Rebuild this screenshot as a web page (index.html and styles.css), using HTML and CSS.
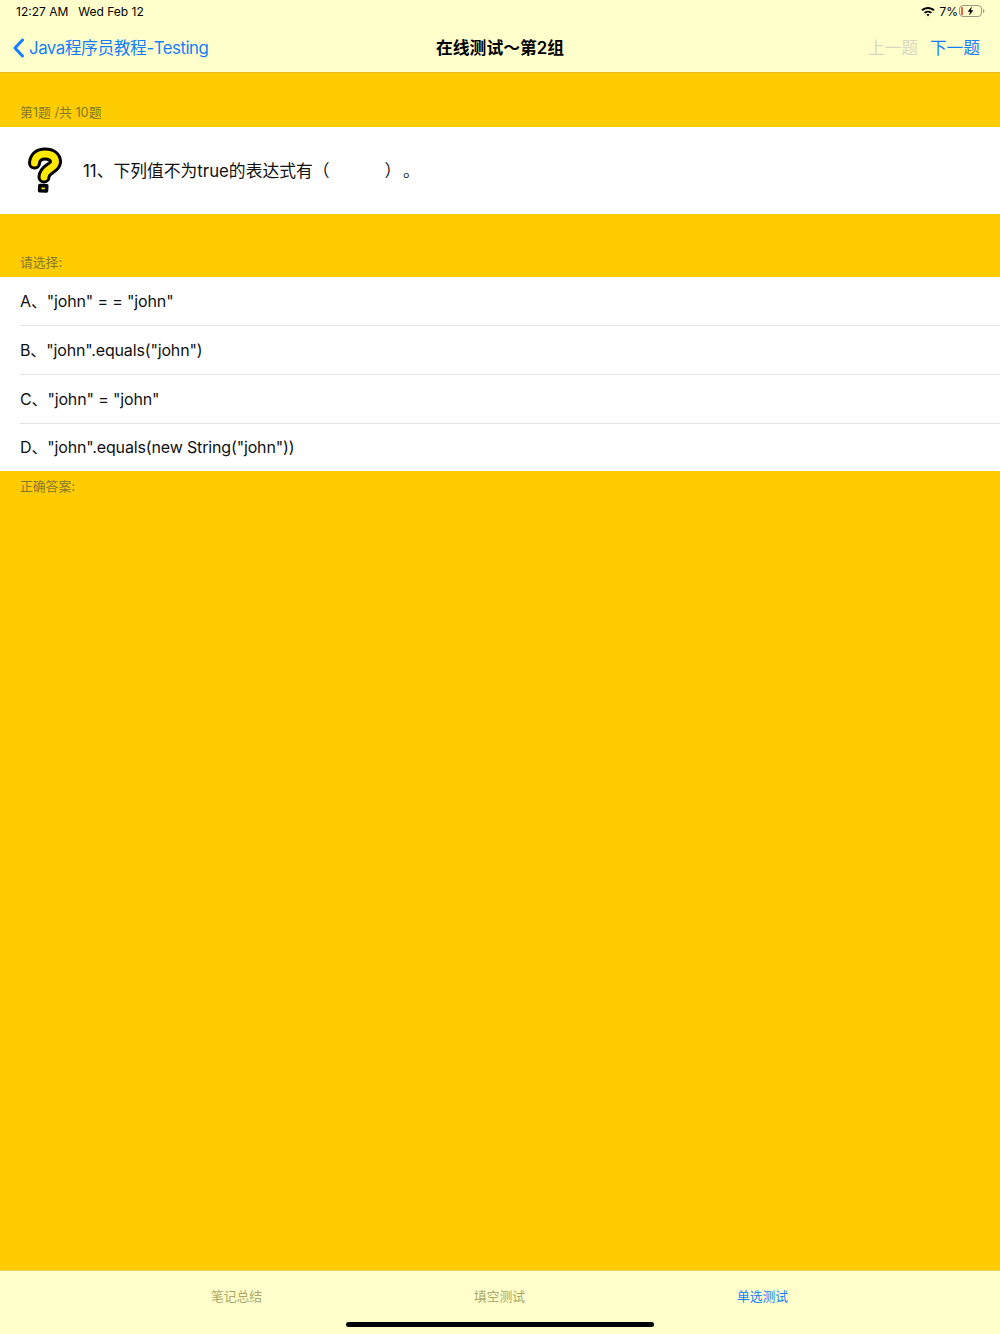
FILE: index.html
```html
<!DOCTYPE html>
<html lang="zh-CN">
<head>
  <meta charset="UTF-8">
  <title>在线测试～第2组</title>
  <link rel="stylesheet" href="styles.css">
</head>
<body>
  <div class="page">
    <!-- 顶部导航 -->
    <header class="top-bar">
      <div class="status-bar">
        <span class="status-time">12:27 AM</span>
        <span class="status-date">Wed Feb 12</span>
        <span class="status-right">
          <svg class="wifi" width="14" height="11" viewBox="0 0 14 11">
            <path d="M0.4 3.600 C4 0.200 10 0.200 13.600 3.600 L12.300 5 C9.400 2.300 4.600 2.300 1.700 5 Z" fill="#000"/>
            <path d="M3 6.200 C5.200 4.200 8.800 4.200 11 6.200 L9.700 7.500 C8.200 6.200 5.800 6.200 4.300 7.500 Z" fill="#000"/>
            <path d="M5.400 8.600 C6.300 7.900 7.700 7.900 8.600 8.600 L7 10.400 Z" fill="#000"/>
          </svg>
          <span class="battery-text">7%</span>
          <svg class="battery" width="26" height="12" viewBox="0 0 26 12">
            <rect x="0.5" y="0.5" width="22" height="11" rx="3.500" fill="none" stroke="#9a9a84"/>
            <rect x="2" y="2" width="2" height="8" rx="0.5" fill="#f0604c"/>
            <path d="M24 4 C25 4.300 25.400 5 25.400 6 C25.400 7 25 7.700 24 8 Z" fill="#9a9a84"/>
            <path d="M12.800 1.500 L8.600 6.800 H11 L10.200 10.500 L14.400 5.200 H12 Z" fill="#000"/>
          </svg>
        </span>
      </div>
      <nav class="nav-bar">
        <a class="nav-back">
          <svg width="13" height="20" viewBox="0 0 13 20">
            <path d="M10.500 2 L3 10 L10.500 18" fill="none" stroke="#147efb" stroke-width="3" stroke-linecap="round" stroke-linejoin="round"/>
          </svg>
          <span>Java程序员教程-Testing</span>
        </a>
        <h1 class="nav-title">在线测试～第2组</h1>
        <div class="nav-actions">
          <span class="nav-disabled">上一题</span>
          <span class="nav-link">下一题</span>
        </div>
      </nav>
    </header>

    <!-- 内容 -->
    <main class="content">
      <div class="section-label label-count">第1题 /共 10题</div>
      <div class="question">
        <svg class="question-icon" width="40" height="48" viewBox="0 0 40 48">
          <path d="M9.500 16 C10 10 14 7 20 7 C26.500 7 30.500 10 30.500 15 C30.500 21.500 19.500 21 19 30" fill="none" stroke="#000" stroke-width="13" stroke-linecap="round" stroke-linejoin="round"/>
          <path d="M9.500 16 C10 10 14 7 20 7 C26.500 7 30.500 10 30.500 15 C30.500 21.500 19.500 21 19 30" fill="none" stroke="#ffe900" stroke-width="7" stroke-linecap="round" stroke-linejoin="round"/>
          <path d="M14.800 38.500 L21.800 38.800 L21.500 44 L14.600 43.700 Z" fill="#ffe900" stroke="#000" stroke-width="3.500" stroke-linejoin="round"/>
        </svg>
        <p class="question-text">11、下列值不为true的表达式有（　　　 ）&#8202;。</p>
      </div>
      <div class="section-label label-choose">请选择:</div>
      <ul class="options">
        <li>A、"john" = = "john"</li>
        <li>B、"john".equals("john")</li>
        <li>C、"john" = "john"</li>
        <li>D、"john".equals(new String("john"))</li>
      </ul>
      <div class="section-label label-answer">正确答案:</div>
    </main>

    <!-- 底部标签栏 -->
    <footer class="tab-bar">
      <div class="tabs">
        <span class="tab">笔记总结</span>
        <span class="tab">填空测试</span>
        <span class="tab tab-active">单选测试</span>
      </div>
      <div class="home-indicator"></div>
    </footer>
  </div>
</body>
</html>
```

FILE: styles.css
```css
/* 整体页面布局 */
body {
  margin: 0;
  padding: 0;
  font-family: Inter, "Noto Sans CJK SC", sans-serif;
  background-color: #ffcc00;
}

.page {
  display: flex;
  flex-direction: column;
  height: 1334px;
  overflow: hidden;
}

/* 顶部导航 */
.top-bar {
  height: 72px;
  background-color: #ffffcc;
  border-bottom: 1px solid #e6bf1c;
  flex-shrink: 0;
}

.status-bar {
  display: flex;
  align-items: center;
  height: 24px;
  box-sizing: border-box;
  padding: 0 16px 2px;
  font-size: 12px;
  color: #000;
}

.status-date {
  margin-left: 10px;
}

.status-right {
  display: flex;
  align-items: center;
  gap: 4px;
  margin-left: auto;
  margin-right: -1px;
}

.battery {
  margin-left: -3px;
}

.nav-bar {
  display: grid;
  grid-template-columns: 1fr auto 1fr;
  align-items: center;
  height: 48px;
  padding: 0 20px;
}

.nav-back {
  display: flex;
  align-items: center;
  gap: 4px;
  margin-left: -8px;
  font-size: 16.800px;
  line-height: 24px;
  letter-spacing: -0.45px;
  color: #147efb;
}

.nav-title {
  margin: 0;
  font-size: 16.800px;
  line-height: 24px;
  font-weight: 600;
  color: #000;
}

.nav-actions {
  display: flex;
  justify-content: flex-end;
  gap: 12px;
  font-size: 16.700px;
  line-height: 24px;
}

.nav-disabled {
  color: #d8d8c0;
}

.nav-link {
  color: #147efb;
}

/* 内容 */
.content {
  flex: 1;
  display: flex;
  flex-direction: column;
}

.section-label {
  padding-left: 20px;
  font-size: 12.800px;
  line-height: 16px;
  color: #85782f;
}

.label-count {
  padding-top: 32px;
  height: 22px;
}

.question {
  display: flex;
  align-items: center;
  height: 87px;
  padding-left: 25px;
  background-color: #fff;
}

.question-icon {
  flex-shrink: 0;
}

.question-text {
  margin: 0 0 0 18px;
  font-size: 16.800px;
  line-height: 24px;
  color: #111;
}

.label-choose {
  height: 63px;
  box-sizing: border-box;
  padding-top: 41px;
}

.options {
  margin: 0;
  padding: 0;
  list-style: none;
  background-color: #fff;
}

.options li {
  height: 48px;
  margin-left: 20px;
  line-height: 48px;
  font-size: 16px;
  letter-spacing: -0.15px;
  color: #111;
  border-bottom: 1px solid #e4e4e4;
}

.options li:last-child {
  height: 47px;
  line-height: 46px;
  border-bottom: none;
}

.label-answer {
  padding-top: 8px;
}

/* 底部标签栏 */
.tab-bar {
  position: relative;
  height: 63px;
  background-color: #ffffcc;
  border-top: 1px solid #e6d36a;
  flex-shrink: 0;
}

.tabs {
  display: flex;
  justify-content: center;
  gap: 211.800px;
  padding: 17px 1px 0 0;
  font-size: 12.800px;
  line-height: 18px;
  color: #a8a868;
}

.tab-active {
  color: #147efb;
}

.home-indicator {
  position: absolute;
  left: 346px;
  bottom: 7px;
  width: 308px;
  height: 5px;
  border-radius: 3px;
  background-color: #000;
}
```
